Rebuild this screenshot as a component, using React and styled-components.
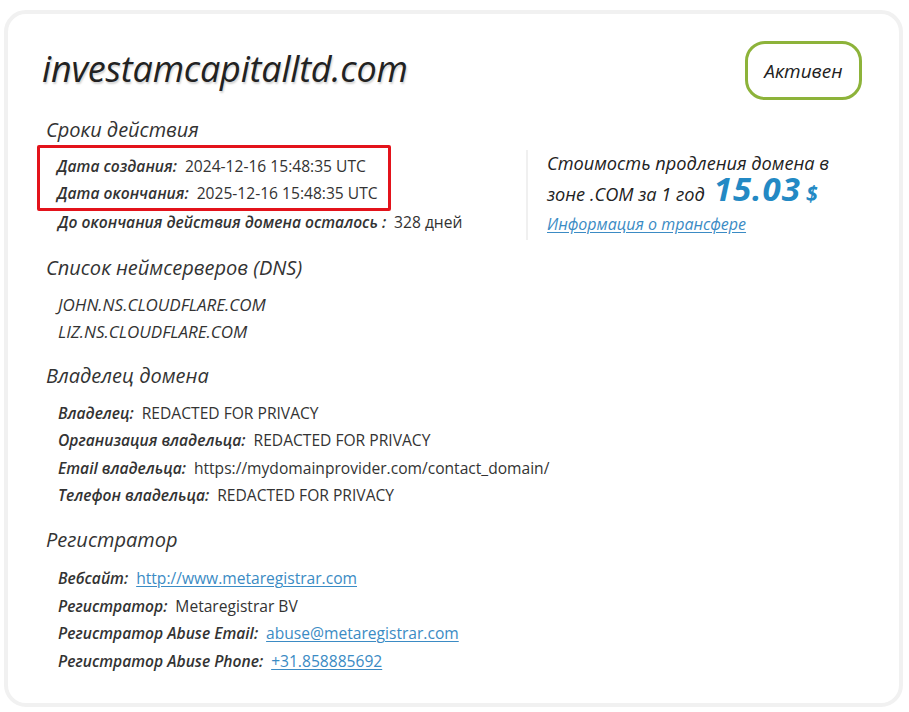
import React from "react";
import styled, { createGlobalStyle } from "styled-components";

const Global = createGlobalStyle`
  html, body { margin: 0; padding: 0; background: #ffffff; }
  body { font-family: "Open Sans", "Noto Sans", sans-serif; color: #333; }
  * { box-sizing: border-box; }
`;

const Page = styled.div`
  padding: 10px 6px 5px 4px;
`;

const Card = styled.div`
  height: 697px;
  border: 4px solid #f1f1f1;
  border-radius: 22px;
  padding: 27px 37px 0 34px;
`;

const Header = styled.div`
  display: flex;
  justify-content: space-between;
  align-items: flex-start;
  height: 60px;
`;

const Title = styled.h1`
  margin: 0;
  padding-top: 6px;
  font-family: "Open Sans", sans-serif;
  font-style: italic;
  font-weight: 500;
  font-size: 36px;
  line-height: 44px;
  color: #222;
  text-shadow: 1px 2px 2px rgba(0, 0, 0, 0.18);
  letter-spacing: -0.2px;
`;

const Badge = styled.div`
  width: 117px;
  height: 59px;
  border: 3px solid #8db33a;
  border-radius: 20px;
  display: flex;
  align-items: center;
  justify-content: center;
  font-style: italic;
  font-weight: 500;
  font-size: 19px;
  color: #222;
`;

const Section = styled.section`
  margin-top: ${(p) => p.$gap || 18}px;
`;

const Heading = styled.h2`
  margin: 0 0 ${(p) => p.$after ?? 10}px 4px;
  font-style: italic;
  font-weight: 400;
  font-size: 20px;
  line-height: 26px;
  color: #333;
`;

const Split = styled.div`
  display: grid;
  grid-template-columns: 484px 1fr;
`;

const LeftCol = styled.div`
  display: flex;
  flex-direction: column;
  align-items: flex-start;
`;

const Highlight = styled.div`
  margin-left: -5px;
  border: 3px solid #e3131b;
  border-radius: 2px;
  padding: 5px 10px 0 17px;
`;

const Rows = styled.div`
  padding-left: ${(p) => p.$indent ?? 16}px;
  margin-top: ${(p) => p.$top || 0}px;
`;

const Row = styled.div`
  display: flex;
  align-items: baseline;
  white-space: nowrap;
  line-height: 27.4px;
  font-size: 15.6px;
`;

const Label = styled.span`
  font-style: italic;
  font-weight: 600;
  color: #333;
  margin-right: 8px;
`;

const Value = styled.span`
  font-weight: 400;
  color: #333;
`;

const Link = styled.a`
  color: #3b8bc4;
  text-decoration: underline;
  text-underline-offset: 2px;
`;

const NS = styled.div`
  font-style: italic;
  font-weight: 500;
  font-size: 17px;
  line-height: 27.4px;
  color: #333;
  padding-left: 16px;
  &:first-of-type { margin-top: -2px; }
`;

const PriceBlock = styled.div`
  margin-top: 5px;
  height: 90px;
  border-left: 2px solid #f0f0f0;
  padding: 1px 0 0 19px;
  font-style: italic;
  font-size: 18.2px;
  color: #222;
`;

const PriceLine = styled.div`
  line-height: ${(p) => p.$lh}px;
  white-space: nowrap;
`;

const Amount = styled.span`
  font-size: 33px;
  line-height: 28px;
  font-weight: 700;
  color: #2389c4;
  margin-left: 9px;
  letter-spacing: 1px;
`;

const Currency = styled.span`
  font-size: 21px;
  line-height: 28px;
  font-weight: 700;
  color: #2389c4;
  margin-left: 5px;
`;

const TransferLink = styled.a`
  color: #3b8bc4;
  font-size: 16px;
  font-weight: 500;
  text-decoration: underline;
  text-underline-offset: 2px;
`;

function DataRow({ label, children }) {
  return (
    <Row>
      <Label>{label}</Label>
      <Value>{children}</Value>
    </Row>
  );
}

export default function App() {
  return (
    <>
      <Global />
      <Page>
        <Card>
          <Header>
            <Title>investamcapitalltd.com</Title>
            <Badge>Активен</Badge>
          </Header>

          <Section $gap={16}>
            <Heading $after={2}>Сроки действия</Heading>
            <Split>
              <LeftCol>
                <Highlight>
                  <DataRow label="Дата создания:">2024-12-16 15:48:35 UTC</DataRow>
                  <DataRow label="Дата окончания:">2025-12-16 15:48:35 UTC</DataRow>
                </Highlight>
                <Rows $top={-2}>
                  <DataRow label="До окончания действия домена осталось :">328 дней</DataRow>
                </Rows>
              </LeftCol>
              <PriceBlock>
                <PriceLine $lh={24}>Стоимость продления домена в</PriceLine>
                <PriceLine $lh={36}>
                  зоне .COM за 1 год<Amount>15.03</Amount>
                  <Currency>$</Currency>
                </PriceLine>
                <PriceLine $lh={22}>
                  <TransferLink href="#">Информация о трансфере</TransferLink>
                </PriceLine>
              </PriceBlock>
            </Split>
          </Section>

          <Section $gap={15}>
            <Heading $after={12}>Список неймсерверов (DNS)</Heading>
            <NS>JOHN.NS.CLOUDFLARE.COM</NS>
            <NS>LIZ.NS.CLOUDFLARE.COM</NS>
          </Section>

          <Section $gap={17}>
            <Heading $after={11}>Владелец домена</Heading>
            <Rows>
              <DataRow label="Владелец:">REDACTED FOR PRIVACY</DataRow>
              <DataRow label="Организация владельца:">REDACTED FOR PRIVACY</DataRow>
              <DataRow label="Email владельца:">https://mydomainprovider.com/contact_domain/</DataRow>
              <DataRow label="Телефон владельца:">REDACTED FOR PRIVACY</DataRow>
            </Rows>
          </Section>

          <Section $gap={18}>
            <Heading $after={12}>Регистратор</Heading>
            <Rows>
              <DataRow label="Вебсайт:">
                <Link href="#">http://www.metaregistrar.com</Link>
              </DataRow>
              <DataRow label="Регистратор:">Metaregistrar BV</DataRow>
              <DataRow label="Регистратор Abuse Email:">
                <Link href="#">abuse@metaregistrar.com</Link>
              </DataRow>
              <DataRow label="Регистратор Abuse Phone:">
                <Link href="#">+31.858885692</Link>
              </DataRow>
            </Rows>
          </Section>
        </Card>
      </Page>
    </>
  );
}
